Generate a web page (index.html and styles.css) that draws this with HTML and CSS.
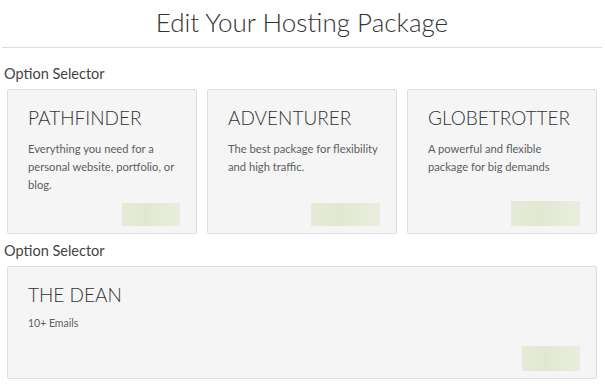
FILE: index.html
```html
<!DOCTYPE html>
<html lang="en">
<head>
    <meta charset="UTF-8">
    <meta name="viewport" content="width=device-width, initial-scale=1.0">
    <title>Edit Your Hosting Package</title>
    <link rel="stylesheet" href="styles.css">
</head>
<body>

    <div class="page">
        <h1 class="page-title">Edit Your Hosting Package</h1>

        <div class="group">
            <div class="group-label">Option Selector</div>
            <div class="options">
                <div class="card">
                    <h2 class="card-title">PATHFINDER</h2>
                    <p class="card-text">Everything you need for a personal website, portfolio, or blog.</p>
                    <div class="price-tag small"></div>
                </div>
                <div class="card">
                    <h2 class="card-title">ADVENTURER</h2>
                    <p class="card-text">The best package for flexibility and high traffic.</p>
                    <div class="price-tag"></div>
                </div>
                <div class="card">
                    <h2 class="card-title">GLOBETROTTER</h2>
                    <p class="card-text">A powerful and flexible package for big demands</p>
                    <div class="price-tag tall"></div>
                </div>
            </div>
        </div>

        <div class="group">
            <div class="group-label">Option Selector</div>
            <div class="options single">
                <div class="card wide">
                    <h2 class="card-title">THE DEAN</h2>
                    <p class="card-text note">10+ Emails</p>
                    <div class="price-tag small tall"></div>
                </div>
            </div>
        </div>
    </div>

</body>
</html>
```

FILE: styles.css
```css
* {
    margin: 0;
    padding: 0;
    box-sizing: border-box;
}
body {
    font-family: "Lato", "Open Sans", sans-serif;
    color: #333;
    background: #fff;
}
.page {
    width: 600px;
    margin-left: 2px;
}
.page-title {
    height: 48px;
    padding-top: 6px;
    border-bottom: 1px solid #ddd;
    text-align: center;
    font-size: 26px;
    font-weight: 300;
    color: #333;
}
.group-label {
    margin: 17px 0 7px 2px;
    font-size: 14.5px;
    color: #444;
}
.group + .group .group-label {
    margin-top: 8px;
}
.options {
    display: grid;
    grid-template-columns: repeat(3, 190px);
    gap: 10px;
    padding-left: 5px;
}
.options.single {
    grid-template-columns: 590px;
}
.card {
    display: flex;
    flex-direction: column;
    min-height: 145px;
    padding: 16px 16px 7px 20px;
    background: #f5f5f5;
    border: 1px solid #ddd;
    border-radius: 2px;
}
.card.wide {
    min-height: 113px;
}
.card-title {
    font-size: 19px;
    font-weight: 300;
    line-height: 24px;
    color: #333;
}
.card-text {
    margin-top: 10px;
    font-size: 11.2px;
    line-height: 18px;
    color: #5e5e5e;
}
.card-text.note {
    margin-top: 7px;
    font-size: 10.5px;
}
.price-tag {
    align-self: flex-end;
    width: 69px;
    height: 23px;
    margin-top: auto;
    background: linear-gradient(90deg, #e6ebd7, #e1e8d0 40%, #e6ebd8 70%, #e9eddd);
}
.price-tag.small {
    width: 58px;
}
.price-tag.tall {
    height: 25px;
}
```
